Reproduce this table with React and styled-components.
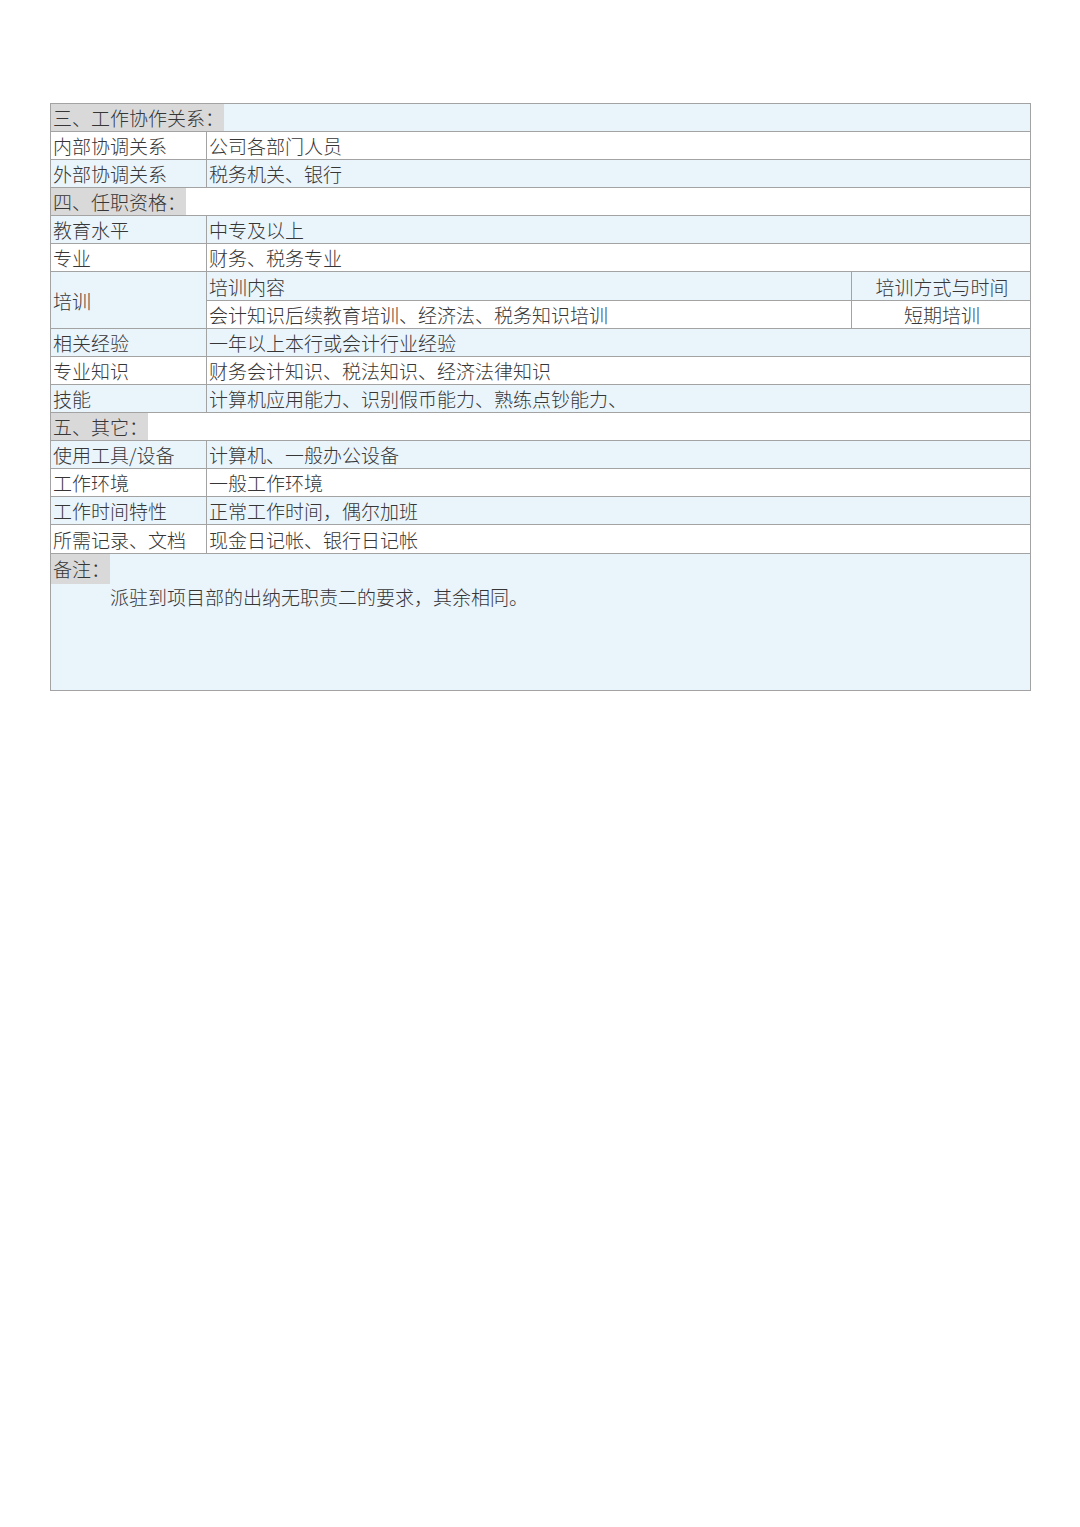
import React from "react";
import styled, { createGlobalStyle } from "styled-components";

const GlobalStyle = createGlobalStyle`
  html, body {
    margin: 0;
    padding: 0;
    background: #fff;
  }
  body {
    font-family: "Noto Sans CJK SC", "Noto Sans", sans-serif;
    color: #363636;
  }
`;

const Page = styled.div`
  width: 1080px;
  min-height: 1527px;
  box-sizing: border-box;
  padding: 103px 50px 0 50px;
`;

const Table = styled.table`
  width: 980px;
  border-collapse: collapse;
  table-layout: fixed;
  font-size: 19px;
  font-weight: 300;
  line-height: 27px;
  border: 1px solid #a3a3a3;
`;

const Row = styled.tr`
  height: ${(p) => p.$h || 28}px;
  background: ${(p) => (p.$blue ? "#eaf4fb" : "#fff")};
`;

const Cell = styled.td`
  border: 1px solid #a3a3a3;
  padding: 0 0 0 2px;
  white-space: nowrap;
  vertical-align: middle;
  text-align: ${(p) => (p.$center ? "center" : "left")};
  background: ${(p) => (p.$white ? "#fff" : "transparent")};
  overflow: hidden;
`;

const SectionCell = styled.td`
  border: 1px solid #a3a3a3;
  padding: 0;
  vertical-align: top;
`;

const SectionLabel = styled.span`
  display: inline-block;
  background: #d9d9d9;
  padding: 0 0 0 2px;
  height: 27px;
  line-height: 27px;
`;

const RemarkCell = styled.td`
  border: 1px solid #a3a3a3;
  padding: 0;
  vertical-align: top;
  height: 136px;
`;

const RemarkLabel = styled.span`
  display: inline-block;
  background: #d9d9d9;
  padding: 0 0 0 2px;
  height: 30px;
  line-height: 30px;
`;

const RemarkText = styled.p`
  margin: 0;
  padding-left: 2px;
  text-indent: 57px;
  line-height: 25px;
`;

const Info = ({ label, value, blue, h }) => (
  <Row $blue={blue} $h={h}>
    <Cell>{label}</Cell>
    <Cell colSpan={2}>{value}</Cell>
  </Row>
);

const Section = ({ title, blue, h }) => (
  <Row $blue={blue} $h={h}>
    <SectionCell colSpan={3}>
      <SectionLabel>{title}</SectionLabel>
    </SectionCell>
  </Row>
);

export default function App() {
  return (
    <Page>
      <GlobalStyle />
      <Table>
        <colgroup>
          <col style={{ width: 156 }} />
          <col style={{ width: 645 }} />
          <col style={{ width: 179 }} />
        </colgroup>
        <tbody>
          <Section title="三、工作协作关系：" blue />
          <Info label="内部协调关系" value="公司各部门人员" />
          <Info label="外部协调关系" value="税务机关、银行" blue />
          <Section title="四、任职资格：" />
          <Info label="教育水平" value="中专及以上" blue />
          <Info label="专业" value="财务、税务专业" />
          <Row $blue $h={29}>
            <Cell rowSpan={2}>培训</Cell>
            <Cell>培训内容</Cell>
            <Cell $center>培训方式与时间</Cell>
          </Row>
          <Row>
            <Cell $white>会计知识后续教育培训、经济法、税务知识培训</Cell>
            <Cell $white $center>短期培训</Cell>
          </Row>
          <Info label="相关经验" value="一年以上本行或会计行业经验" blue />
          <Info label="专业知识" value="财务会计知识、税法知识、经济法律知识" />
          <Info label="技能" value="计算机应用能力、识别假币能力、熟练点钞能力、" blue />
          <Section title="五、其它：" />
          <Info label="使用工具/设备" value="计算机、一般办公设备" blue />
          <Info label="工作环境" value="一般工作环境" />
          <Info label="工作时间特性" value="正常工作时间，偶尔加班" blue />
          <Info label="所需记录、文档" value="现金日记帐、银行日记帐" h={29} />
          <Row $blue>
            <RemarkCell colSpan={3}>
              <RemarkLabel>备注：</RemarkLabel>
              <RemarkText>派驻到项目部的出纳无职责二的要求，其余相同。</RemarkText>
            </RemarkCell>
          </Row>
        </tbody>
      </Table>
    </Page>
  );
}
